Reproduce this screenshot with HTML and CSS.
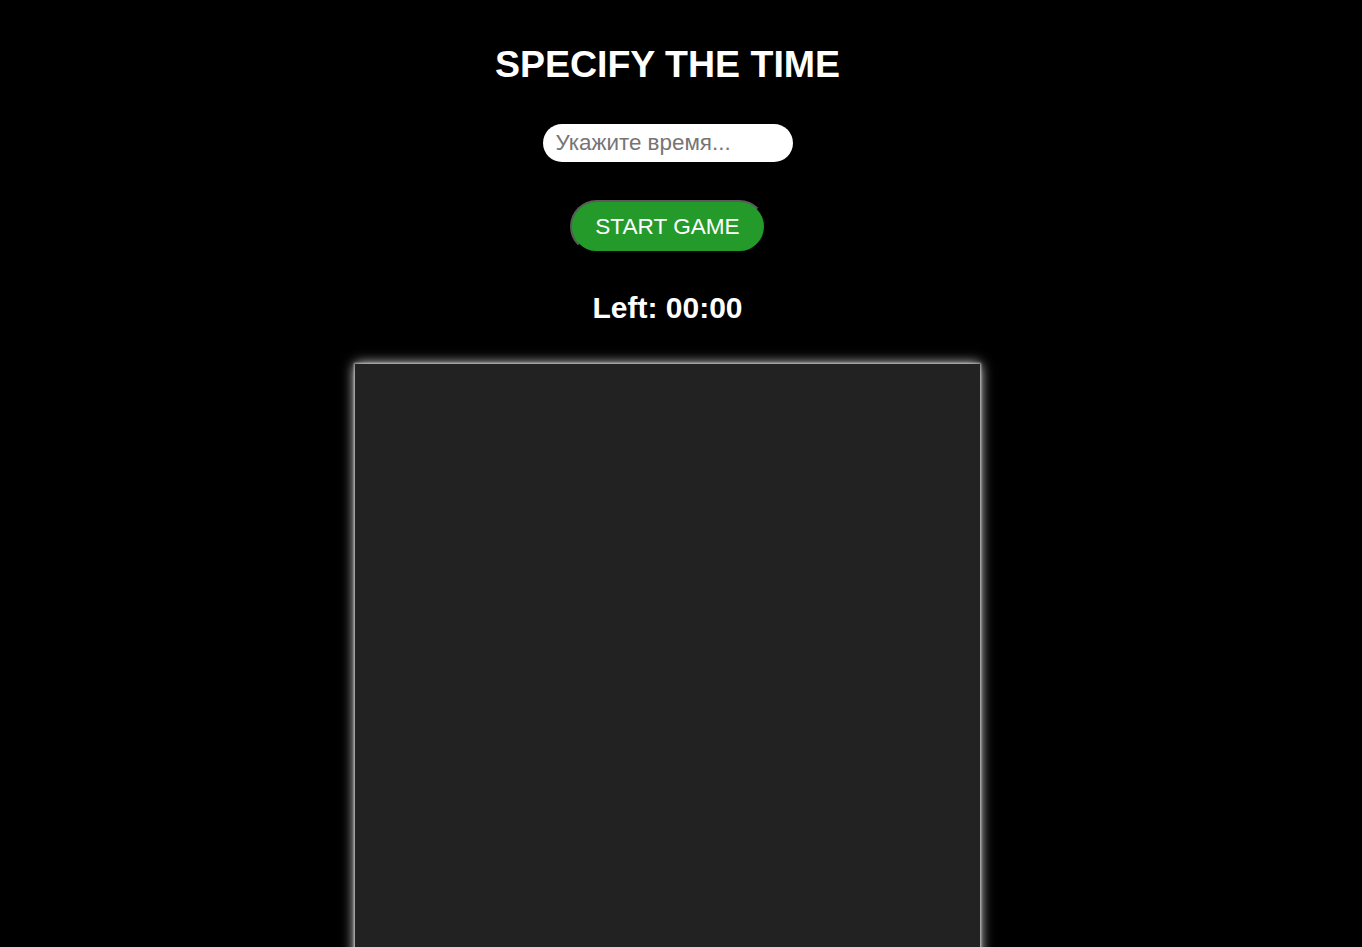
FILE: index.html
```html
<!DOCTYPE html>
<html lang="ru">
<head>
<meta charset="utf-8">
<title>Specify the time</title>
<link rel="stylesheet" href="styles.css">
</head>
<body>
<main class="page">
  <h1 class="title">SPECIFY THE TIME</h1>
  <input class="time-input" type="text" placeholder="Укажите время...">
  <button class="start-btn" type="button">START GAME</button>
  <h2 class="timer">Left: <span>00:00</span></h2>
  <div class="board"></div>
</main>
</body>
</html>
```
FILE: styles.css
```css
html, body {
  margin: 0;
  padding: 0;
  background: #000;
  overflow: hidden;
}
body {
  font-family: "Liberation Sans", Arial, sans-serif;
  color: #fff;
}
.page {
  width: 1335px;
  display: flex;
  flex-direction: column;
  align-items: center;
  padding-top: 42px;
}
.title {
  margin: 0;
  font-size: 37.5px;
  line-height: 44px;
  font-weight: 700;
}
.time-input {
  margin-top: 38px;
  width: 250px;
  height: 38px;
  box-sizing: border-box;
  border: none;
  border-radius: 19px;
  padding: 0 13px;
  font-family: "Liberation Sans", Arial, sans-serif;
  font-size: 22.4px;
  color: #333;
  background: #fff;
  outline: none;
}
.time-input::placeholder {
  color: #757575;
}
.start-btn {
  margin-top: 38px;
  width: 196px;
  height: 53px;
  box-sizing: border-box;
  border: 2px outset #5a5a5a;
  border-radius: 27px;
  background: #239a29;
  color: #fff;
  font-family: "Liberation Sans", Arial, sans-serif;
  font-size: 22.6px;
  padding: 0;
}
.timer {
  margin: 38px 0 0;
  font-size: 30px;
  line-height: 34px;
  font-weight: 700;
}
.board {
  margin-top: 39px;
  width: 625px;
  height: 625px;
  box-sizing: border-box;
  background: #222;
  border: none;
  box-shadow: 0 0 2px 1px rgba(200, 200, 200, 0.8), 0 0 12px #fff;
}
```
